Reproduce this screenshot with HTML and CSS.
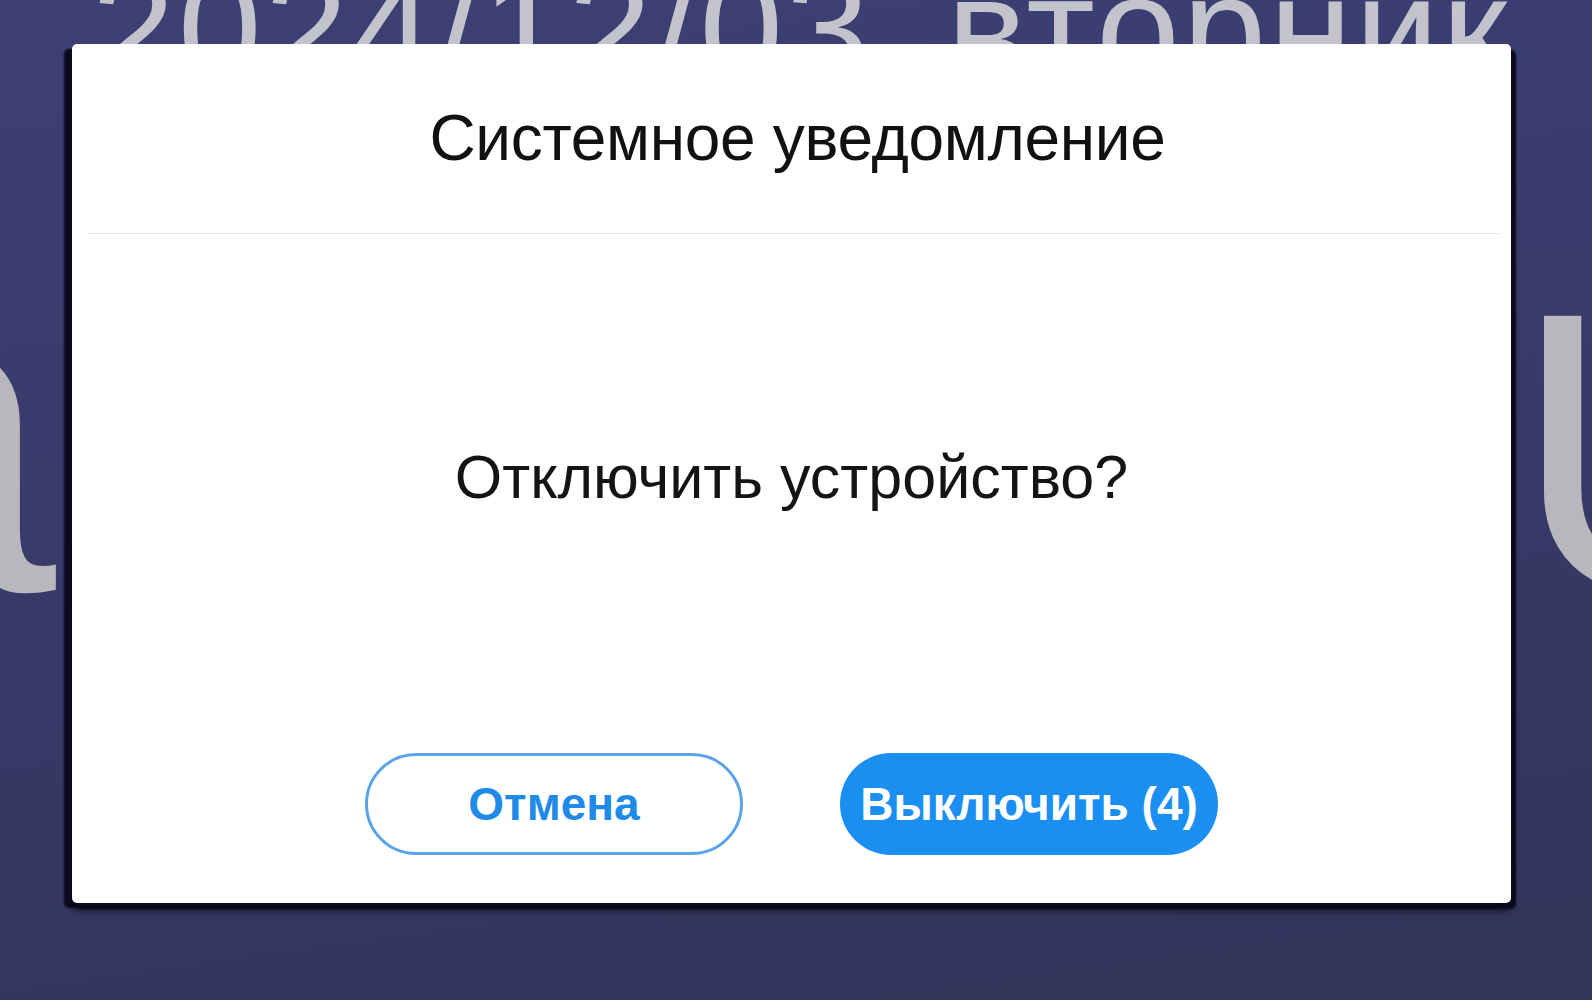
FILE: index.html
```html
<!DOCTYPE html>
<html lang="ru">
<head>
    <meta charset="UTF-8">
    <meta name="viewport" content="width=device-width, initial-scale=1.0">
    <title>Системное уведомление</title>
    <link rel="stylesheet" href="styles.css">
</head>
<body>
    <div class="screen">
        <!-- home screen behind the dialog -->
        <div class="date-line">2024/12/03 <span class="weekday">вторник</span></div>
        <div class="big-row">
            <span class="big-left">а</span>
            <span class="big-right">U</span>
        </div>

        <div class="dialog">
            <div class="dialog-header">
                <h1 class="dialog-title">Системное уведомление</h1>
            </div>
            <div class="divider"></div>
            <div class="dialog-body">
                <p class="dialog-message">Отключить устройство?</p>
                <div class="dialog-buttons">
                    <button class="btn btn-cancel" id="cancel">Отмена</button>
                    <button class="btn btn-confirm" id="confirm">Выключить (<span id="countdown">4</span>)</button>
                </div>
            </div>
        </div>
    </div>
</body>
</html>
```

FILE: styles.css
```css
html, body {
    margin: 0;
    padding: 0;
}
body {
    width: 1592px;
    height: 1000px;
    overflow: hidden;
    font-family: "Liberation Sans", Arial, sans-serif;
}
.screen {
    position: relative;
    width: 100%;
    height: 100%;
    overflow: hidden;
    background: linear-gradient(172deg, #3c4074 0%, #383a6a 45%, #333459 100%);
}
.date-line {
    margin-top: -46px;
    font-size: 150px;
    line-height: 1;
    letter-spacing: 3px;
    text-align: center;
    color: #c3c4cb;
    white-space: nowrap;
    padding-left: 10px;
}
.weekday {
    margin-left: 30px;
}
.big-row {
    display: flex;
    justify-content: space-between;
    align-items: baseline;
    margin-top: 98px;
    font-size: 460px;
    line-height: 1;
    color: #b7b7bd;
}
.big-left {
    margin-left: -200px;
}
.big-right {
    font-size: 400px;
    margin-right: -210px;
}
.dialog {
    position: absolute;
    left: 72px;
    top: 44px;
    width: 1439px;
    height: 859px;
    display: flex;
    flex-direction: column;
    background-color: #ffffff;
    border-radius: 5px;
    box-shadow: -8px 5px 2px #0b0a1c, 5px 6px 2px #0b0a1c, 0 8px 6px rgba(5, 5, 20, 0.6);
}
.dialog-header {
    height: 189px;
    display: flex;
    justify-content: center;
    align-items: center;
}
.dialog-title {
    margin: 0 0 0 12px;
    font-size: 64px;
    font-weight: normal;
    line-height: 75px;
    letter-spacing: -0.3px;
    color: #111111;
}
.divider {
    height: 1px;
    margin: 0 11px 0 17px;
    background-color: #e4e4e4;
}
.dialog-body {
    flex: 1;
    display: flex;
    flex-direction: column;
    align-items: center;
}
.dialog-message {
    margin: 208px 0 0;
    font-size: 61px;
    line-height: 70px;
    color: #141414;
}
.dialog-buttons {
    display: flex;
    gap: 97px;
    margin-top: auto;
    margin-bottom: 48px;
}
.btn {
    width: 378px;
    height: 102px;
    border-radius: 51px;
    font-family: "Liberation Sans", Arial, sans-serif;
    font-size: 46px;
    font-weight: bold;
    cursor: pointer;
}
.btn-cancel {
    background-color: #ffffff;
    border: 3px solid #5aa3e6;
    color: #1f8ae8;
}
.btn-confirm {
    background-color: #1b8ef2;
    border: none;
    color: #ffffff;
}
```
